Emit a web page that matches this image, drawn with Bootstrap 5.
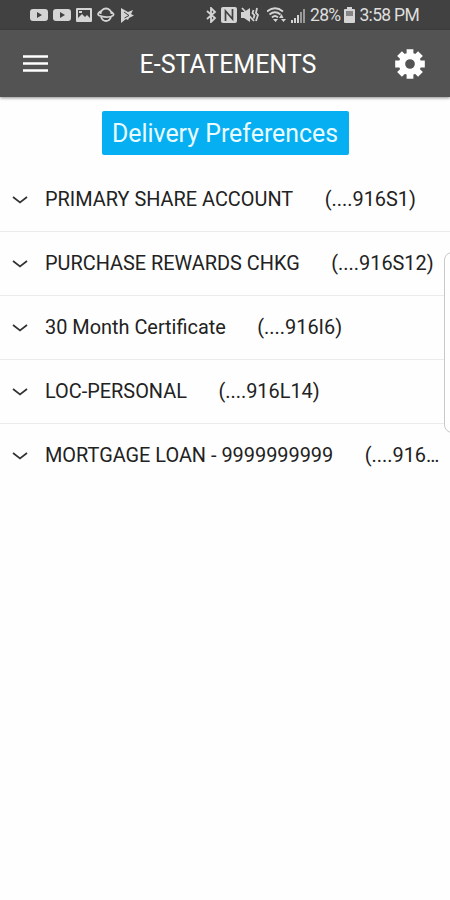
<!DOCTYPE html>
<html lang="en">
<head>
<meta charset="utf-8">
<meta name="viewport" content="width=device-width, initial-scale=1">
<title>E-Statements</title>
<link href="https://cdn.jsdelivr.net/npm/bootstrap@5.3.0/dist/css/bootstrap.min.css" rel="stylesheet">
<style>
body{font-family:Roboto,sans-serif;background:#fefefe;color:#222;height:900px;overflow:hidden}
.status-bar{height:30px;background:#414141;color:#dedede;padding:0 31px 0 30px;font-size:17.5px;letter-spacing:-.7px}
.status-bar svg{fill:#d4d4d4;flex:none;display:block}
.status-left{gap:5px}
.status-right{gap:4px}
.title-bar{height:67px;background:#535353;color:#fff;padding:0 24px 0 23px;box-shadow:0 1px 3px rgba(0,0,0,.45)}
.title-bar h1{font-size:25px;line-height:30px;padding:2px 0 0 14px}
.title-bar .btn{line-height:0}
.delivery{margin-top:14px;width:247px;height:44px;background:#05aff2;color:#e9fbff;font-size:24.9px;line-height:45px;border-radius:2px}
.delivery:hover{background:#05a2e0;color:#fff}
.accounts{margin-top:13px}
.account{height:64px;padding:1px 8px 0 12px;font-size:19.9px;border-bottom:1px solid #ebebeb}
.account:last-child{border-bottom-color:transparent}
.account svg{flex:none;margin-right:17px}
.account .num{margin-left:31.5px}
.edge-panel{right:-12px;top:252px;width:18px;height:181px;border:1.5px solid #c9c9c9;border-radius:8px;background:#fefefe}
</style>
</head>
<body class="position-relative">
<div class="status-bar d-flex justify-content-between align-items-center">
  <div class="status-left d-flex align-items-center">
    <svg width="18" height="14" viewBox="0 0 18 14"><path fill-rule="evenodd" d="M3 1h12q3 0 3 3v6q0 3-3 3H3q-3 0-3-3V4q0-3 3-3zm4 3v6l5-3z"/></svg>
    <svg width="18" height="14" viewBox="0 0 18 14"><path fill-rule="evenodd" d="M3 1h12q3 0 3 3v6q0 3-3 3H3q-3 0-3-3V4q0-3 3-3zm4 3v6l5-3z"/></svg>
    <svg width="16" height="14" viewBox="0 0 16 14"><path fill-rule="evenodd" d="M1 0h14q1 0 1 1v12q0 1-1 1H1q-1 0-1-1V1q0-1 1-1zm1 2v8l4-4 3 3 2-2 3 3V2zM3 3h3v2H3z"/></svg>
    <svg width="18" height="16" viewBox="0 0 18 16"><g fill="none" stroke="#d4d4d4" stroke-width="1.8"><path d="M3.500 7a5.500 5.500 0 0 1 11 0M4 10q1.500 4 5 4t5-4"/><path d="M4 4Q-.5 7 2 8.500Q8 11 14 9.500Q19 8 14.500 5"/></g></svg>
    <svg width="15" height="15" viewBox="0 0 15 15"><path d="M1 0l7 4 5-2-2 4 3 1.500-5 2.500-1 2-2-1-5 4z"/><path d="M4 4l5 3.500L4.500 10" fill="none" stroke="#414141"/></svg>
  </div>
  <div class="status-right d-flex align-items-center">
    <svg width="12" height="16" viewBox="0 0 12 16"><path d="M2 4l8 7-4 4V1l4 4-8 7" fill="none" stroke="#d4d4d4" stroke-width="1.8"/></svg>
    <svg width="16" height="16" viewBox="0 0 16 16"><path d="M2 0h12q2 0 2 2v12q0 2-2 2H2q-2 0-2-2V2q0-2 2-2z"/><path d="M4.500 14V4l7 8V2" fill="none" stroke="#414141" stroke-width="1.700"/></svg>
    <svg width="18" height="16" viewBox="0 0 18 16"><path d="M0 5h3l6-4v14l-6-4H0z"/><path d="M1 1l12 13M12.500 3l-1 3 2 2.500-1 3M16 1l-1 5 2 2-2 6" fill="none" stroke="#d4d4d4" stroke-width="1.800"/></svg>
    <svg class="ms-1" width="20" height="16" viewBox="0 0 20 16"><g fill="none" stroke="#d4d4d4" stroke-width="1.800"><path d="M0 4.500Q8-2 16 4.500M2.500 7.500Q8 3 13.500 7.500M5 10.500q3-3 6 0"/></g><path d="M6 12h5l-2.500 3zM12 11l2.500-4 2 4zm2 1h5l-2.500 3z"/></svg>
    <svg width="15" height="15" viewBox="0 0 15 15"><path d="M0 12h2v3H0zm3-2h2v5H3zm3-3h2v8H6z"/><path fill="#999" d="M9 4h2v11H9zm3-3h2v14h-2z"/></svg>
    <span>28%</span>
    <svg width="11" height="16" viewBox="0 0 11 16"><path d="M3 0h5v2h2q1 0 1 1v12q0 1-1 1H1q-1 0-1-1V3q0-1 1-1h2z"/><path fill="#858585" d="M2 4h7v5H2z"/></svg>
    <span>3:58 PM</span>
  </div>
</div>
<header class="title-bar d-flex justify-content-between align-items-center">
  <button class="btn p-0 border-0" aria-label="Menu"><svg width="25" height="17" viewBox="0 0 25 17"><path d="M0 1.500h25M0 8.500h25M0 15.500h25" stroke="#fff" stroke-width="2.600"/></svg></button>
  <h1 class="m-0 fw-normal">E-STATEMENTS</h1>
  <button class="btn p-0 border-0" aria-label="Settings"><svg width="32" height="30" viewBox="-16 -15.500 32 31"><g fill="#fff"><path fill-rule="evenodd" d="M0-11.500a11.500 11.500 0 1 0 0 23a11.500 11.500 0 1 0 0-23zm0 6.500a5 5 0 1 1 0 10a5 5 0 1 1 0-10z"/><path id="tooth" d="M-3.500-10v-5.300h7v5.300zM-3.500 10v5.300h7V10z"/><use href="#tooth" transform="rotate(45)"/><use href="#tooth" transform="rotate(90)"/><use href="#tooth" transform="rotate(135)"/></g></svg></button>
</header>
<main>
  <a href="#" class="delivery btn border-0 p-0 d-block mx-auto">Delivery Preferences</a>
  <div class="accounts d-flex flex-column">
    <div class="account d-flex align-items-center"><svg width="16" height="10" viewBox="0 0 16 10"><path d="M1 2l7 5.500L15 2" fill="none" stroke="#333" stroke-width="1.700"/></svg><div class="text-nowrap"><span>PRIMARY SHARE ACCOUNT</span><span class="num">(....916S1)</span></div></div>
    <div class="account d-flex align-items-center"><svg width="16" height="10" viewBox="0 0 16 10"><path d="M1 2l7 5.500L15 2" fill="none" stroke="#333" stroke-width="1.700"/></svg><div class="text-nowrap"><span>PURCHASE REWARDS CHKG</span><span class="num">(....916S12)</span></div></div>
    <div class="account d-flex align-items-center"><svg width="16" height="10" viewBox="0 0 16 10"><path d="M1 2l7 5.500L15 2" fill="none" stroke="#333" stroke-width="1.700"/></svg><div class="text-nowrap"><span>30 Month Certificate</span><span class="num">(....916I6)</span></div></div>
    <div class="account d-flex align-items-center"><svg width="16" height="10" viewBox="0 0 16 10"><path d="M1 2l7 5.500L15 2" fill="none" stroke="#333" stroke-width="1.700"/></svg><div class="text-nowrap"><span>LOC-PERSONAL</span><span class="num">(....916L14)</span></div></div>
    <div class="account d-flex align-items-center"><svg width="16" height="10" viewBox="0 0 16 10"><path d="M1 2l7 5.500L15 2" fill="none" stroke="#333" stroke-width="1.700"/></svg><div class="text-nowrap"><span>MORTGAGE LOAN - 9999999999</span><span class="num">(....916…</span></div></div>
  </div>
</main>
<div class="edge-panel position-absolute"></div>
<script src="https://cdn.jsdelivr.net/npm/bootstrap@5.3.0/dist/js/bootstrap.bundle.min.js"></script>
</body>
</html>
